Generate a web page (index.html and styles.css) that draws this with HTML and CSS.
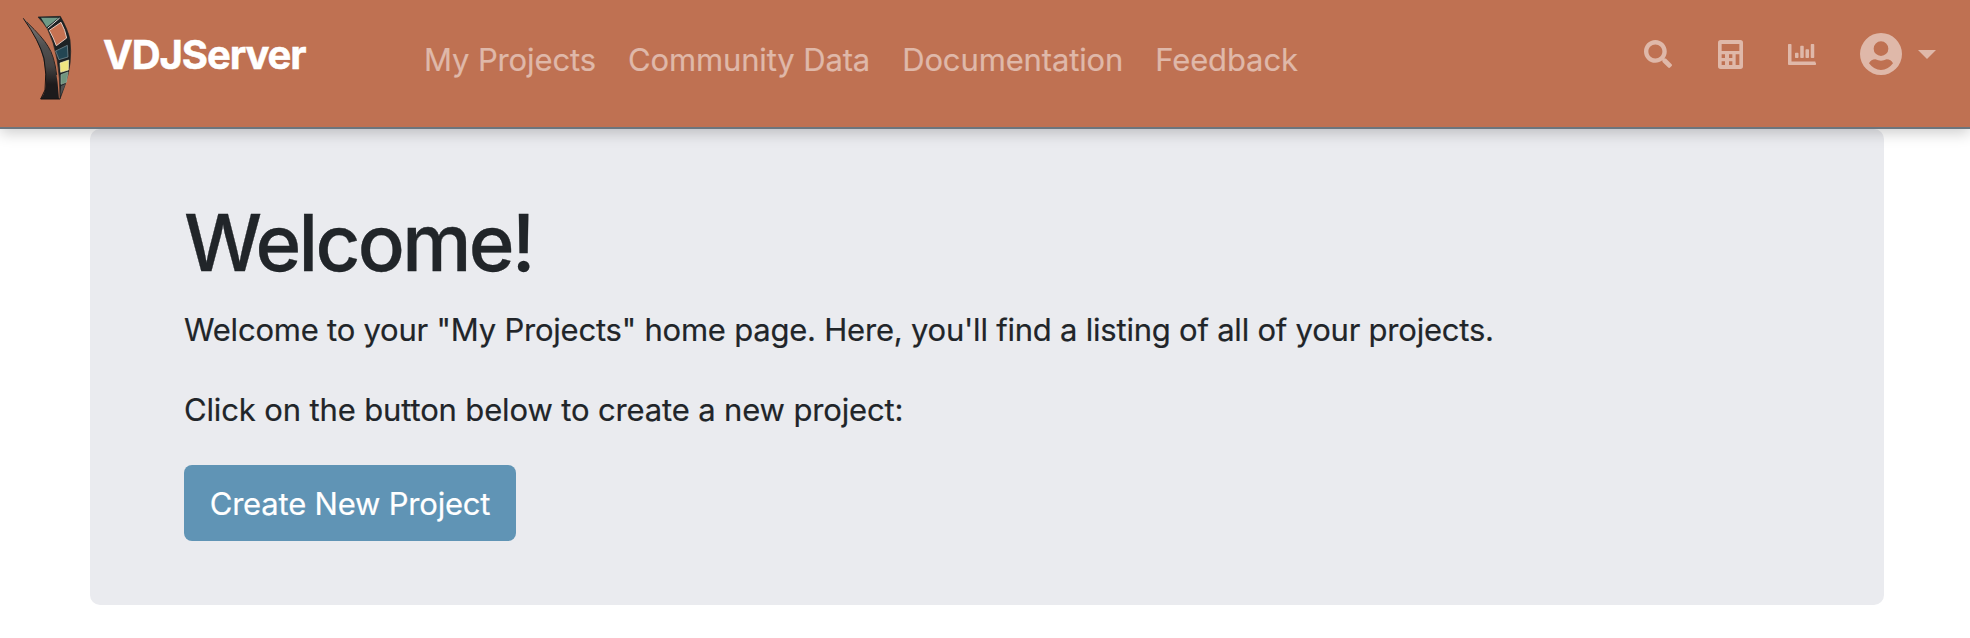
FILE: index.html
```html
<!DOCTYPE html>
<html lang="en"><head><meta charset="utf-8"><title>VDJServer</title><link rel="stylesheet" href="styles.css"></head>
<body>
<header class="navbar">
<a class="brand"><svg class="logo" viewBox="0 0 240 315" width="80" height="105" stroke-linejoin="round">
<defs><linearGradient id="trunk" x1="0" y1="0" x2="0" y2="1"><stop offset="0" stop-color="#8a8482"/><stop offset=".35" stop-color="#505050"/><stop offset=".6" stop-color="#454343"/><stop offset=".82" stop-color="#1d1b1c"/></linearGradient></defs>
<path d="M37 35Q69 72 98 102Q125 134 135 182Q144 229 147 282L92 282Q109 262 108 225Q107 183 95 145Q79 90 37 35Z" fill="url(#trunk)"/>
<path d="M40 40Q88 108 102 160Q111 207 105 255L92 282H150" fill="none" stroke="#151313" stroke-width="3"/>
<path d="M50 51Q99 98 114 124Q133 152 140 210" fill="none" stroke="#252222" stroke-width="3"/>
<path d="M84 36L151 34Q174 74 180 105Q188 174 165 240L150 282Q151 150 113 73Q100 52 84 36Z" fill="#1d2224" stroke="#1d2224" stroke-width="2"/>
<path d="M93 38L146 38L110 67Z" fill="#6f9a87"/>
<path d="M118 76L153 52Q166 76 170 99L139 122Q131 99 118 76Z" fill="#c67252" stroke="#e5c9be" stroke-width="3"/>
<path d="M137 138L172 121L174 156L147 164Z" fill="#234653" stroke="#84979e" stroke-width="2"/>
<path d="M150 174L176 165L175 195L152 202Z" fill="#eee580" stroke="#f5f0bf" stroke-width="2"/>
<path d="M153 209L174 201L169 232L153 238Z" fill="#70957e" stroke="#9bb3a4" stroke-width="2"/>
<path d="M153 243L167 236L151 274Z" fill="#515151"/>
<path d="M113 70L149 39" stroke="#e5e5df" stroke-width="3"/>
</svg><span class="brand-name">VDJServer</span></a>
<nav class="links"><a>My Projects</a><a>Community Data</a><a>Documentation</a><a>Feedback</a></nav>
<div class="tools">
<svg width="28" height="28" viewBox="0 0 512 512" fill="currentColor"><path d="M505 442.700 405.300 343c-4.500-4.500-10.600-7-17-7H372c27.600-35.300 44-79.700 44-128C416 93.100 322.900 0 208 0S0 93.100 0 208s93.100 208 208 208c48.300 0 92.700-16.400 128-44v16.300c0 6.400 2.500 12.500 7 17l99.700 99.700c9.400 9.400 24.600 9.400 33.900 0l28.300-28.300c9.400-9.400 9.400-24.600.1-34zM208 336c-70.700 0-128-57.200-128-128 0-70.700 57.200-128 128-128 70.700 0 128 57.200 128 128 0 70.700-57.200 128-128 128z"/></svg>
<svg class="calc" width="25" height="29" viewBox="0 0 75 87" fill="currentColor"><path fill-rule="evenodd" d="M8 0H67Q75 0 75 8V79Q75 87 67 87H8Q0 87 0 79V8Q0 0 8 0ZM11 12V33H64V12ZM11 43V54H21V43ZM33 43V54H43V43ZM53 43V75H64V43ZM11 64V75H21V64ZM33 64V75H43V64Z"/></svg>
<svg class="chart" width="28" height="21" viewBox="0 0 512 384" fill="currentColor"><path d="M500 336c7 0 12 5 12 12v24c0 7-5 12-12 12H16c-9 0-16-7-16-16V12C0 5 5 0 12 0h40c7 0 12 5 12 12v308h436zM332.800 256h38.400c6.400 0 12.800-6.400 12.800-12.800V108.800c0-6.400-6.400-12.800-12.800-12.800h-38.400c-6.400 0-12.800 6.400-12.800 12.800v134.400c0 6.400 6.400 12.800 12.800 12.800zm96 0h38.400c6.400 0 12.800-6.400 12.800-12.800V12.800C480 6.400 473.600 0 467.200 0h-38.400C422.400 0 416 6.400 416 12.800v230.400c0 6.400 6.400 12.800 12.800 12.800zm-288 0h38.400c6.400 0 12.800-6.400 12.800-12.800v-70.400c0-6.400-6.400-12.800-12.800-12.800h-38.400c-6.400 0-12.800 6.400-12.800 12.800v70.400c0 6.400 6.400 12.800 12.800 12.800zm96 0h38.400c6.400 0 12.800-6.400 12.800-12.800V44.800c0-6.400-6.400-12.800-12.800-12.800h-38.400c-6.400 0-12.800 6.400-12.800 12.800v198.400c0 6.400 6.400 12.800 12.800 12.800z"/></svg>
<svg class="user" width="42" height="42" viewBox="0 0 126 126" fill="currentColor"><path fill-rule="evenodd" d="M63 0A63 63 0 1 1 63 126A63 63 0 1 1 63 0ZM63 25A22 22 0 1 0 63 69A22 22 0 1 0 63 25ZM27 91Q42 111 63 111T99 91Q93 79 80 79Q71 83 63 83T46 79Q33 79 27 91Z"/></svg>
<svg class="caret" width="18" height="9" viewBox="0 0 18 9" fill="currentColor"><path d="M0 0H18L9 9Z"/></svg>
</div>
</header>
<main class="jumbotron">
<h1>Welcome!</h1>
<p class="intro">Welcome to your "My Projects" home page. Here, you'll find a listing of all of your projects.</p>
<p>Click on the button below to create a new project:</p>
<button class="btn">Create New Project</button>
</main>
</body></html>
```
FILE: styles.css
```css
* { box-sizing: border-box; }
body { margin: 0; background: #fff; color: #212529; font: 31px/48px Inter, "Liberation Sans", sans-serif; letter-spacing: -.14px; -webkit-text-stroke: .2px currentColor; }
.navbar { position: relative; z-index: 1; display: flex; height: 129px; border-bottom: 2px solid #6c757d; background: #bf7152; box-shadow: 0 4px 14px rgba(0,0,0,.2); }
.brand { display: flex; width: 424px; padding: 5px 0 0 10px; color: #fff; }
.logo { flex: none; }
.brand-name { margin: 20px 0 0 13px; font-size: 40px; line-height: 60px; font-weight: 700; letter-spacing: -1.1px; -webkit-text-stroke: .5px; }
.links { display: flex; gap: 32px; padding-top: 36px; color: #dfb8a9; letter-spacing: -.13px; }
.tools { display: flex; margin-left: auto; padding: 33px 34px 0 0; color: #dfb8a9; }
.tools svg { flex: none; margin-top: 7px; }
.tools .calc { margin-left: 46px; }
.tools .chart { margin-left: 45px; margin-top: 11px; }
.tools .user { margin-left: 44px; margin-top: 0; }
.tools .caret { margin-left: 16px; margin-top: 17px; }
.jumbotron { width: 1794px; height: 476px; margin-left: 90px; padding: 66px 94px 64px; border-radius: 10px; background: #eaebef; }
h1 { margin: 0 0 15px; font-size: 78px; line-height: 96px; font-weight: 500; letter-spacing: -2.75px; -webkit-text-stroke: .3px; }
p { margin: 0 0 32px; white-space: nowrap; }
.intro { letter-spacing: -.22px; }
.btn { display: block; width: 332px; height: 76px; margin-top: -1px; padding: 1px 0 0; border: 0; border-radius: 8px; background: #6094b5; color: #fff; font: inherit; letter-spacing: -.2px; }
```
